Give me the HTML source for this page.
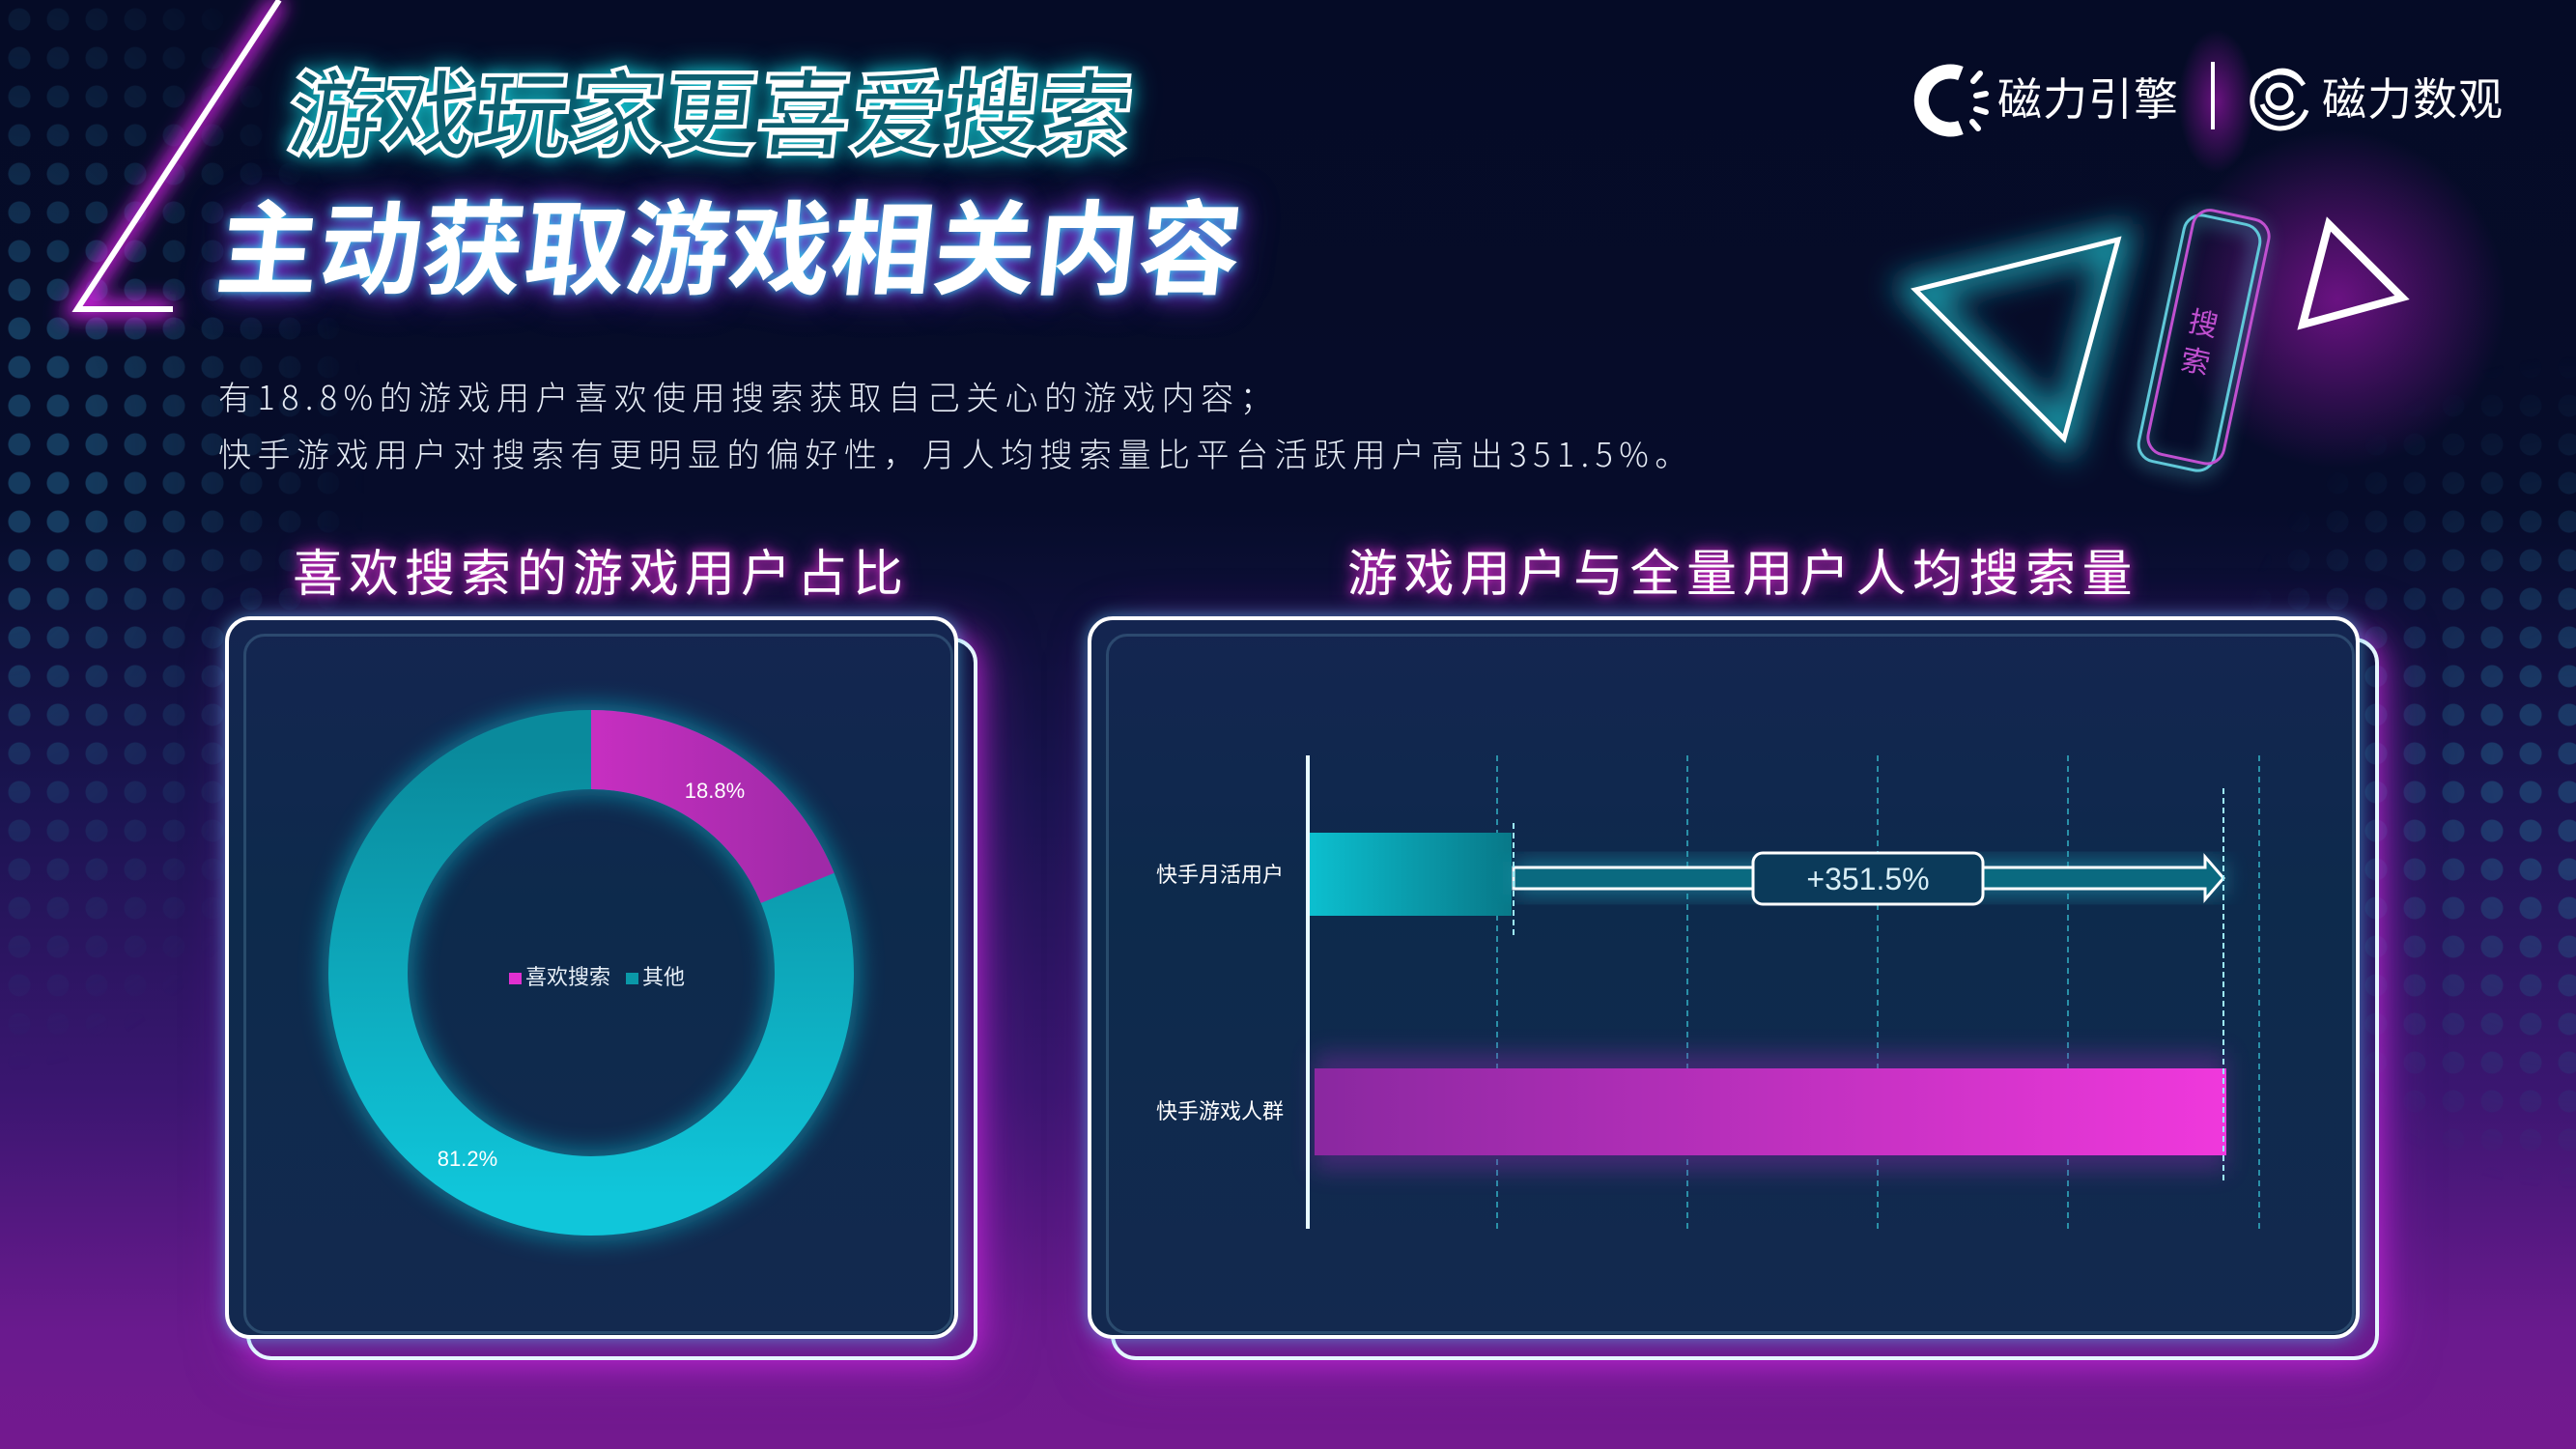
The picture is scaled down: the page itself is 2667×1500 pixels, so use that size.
<!DOCTYPE html>
<html><head><meta charset="utf-8">
<style>
*{margin:0;padding:0;box-sizing:border-box}
html,body{width:2667px;height:1500px;overflow:hidden}
body{position:relative;font-family:"Liberation Sans","Noto Sans CJK SC",sans-serif;
background:linear-gradient(180deg,#050b26 0%,#060c2a 35%,#1a1450 55%,#3a1670 75%,#6a1a8e 92%,#74198f 100%);}
.dots{position:absolute;inset:0;
background-image:radial-gradient(circle,rgba(35,100,140,.6) 0 11px,transparent 12px);
background-size:40px 40px;}
.dl{-webkit-mask-image:radial-gradient(ellipse 420px 700px at 0px 480px,rgba(0,0,0,.9) 20%,rgba(0,0,0,.4) 55%,transparent 90%);mask-image:radial-gradient(ellipse 420px 700px at 0px 480px,rgba(0,0,0,.9) 20%,rgba(0,0,0,.4) 55%,transparent 90%)}
.dr{-webkit-mask-image:radial-gradient(ellipse 420px 480px at 2667px 800px,rgba(0,0,0,.8) 20%,rgba(0,0,0,.35) 60%,transparent 90%);mask-image:radial-gradient(ellipse 420px 480px at 2667px 800px,rgba(0,0,0,.8) 20%,rgba(0,0,0,.35) 60%,transparent 90%)}
.abs{position:absolute}
.t1{left:300px;top:62px;font-size:97px;font-weight:700;font-family:"Noto Sans CJK SC",sans-serif;color:#0c5f70;-webkit-text-stroke:4px #fff;transform:skewX(-6deg);text-shadow:0 0 18px #1ad0e0,0 0 30px #0aa;white-space:nowrap;line-height:1}
.t2{left:226px;top:197px;font-size:106px;font-weight:700;font-family:"Noto Sans CJK SC",sans-serif;color:#fff;transform:skewX(-6deg);text-shadow:0 0 10px #30d8f0,0 0 24px #7a3ad8,0 0 40px #6a2ac0;white-space:nowrap;line-height:1}
.p{left:226px;font-size:34px;color:#e6ecf5;letter-spacing:6.5px;white-space:nowrap;line-height:1;font-family:"Noto Sans CJK SC",sans-serif;font-weight:300}
.st{font-size:52px;color:#fff;font-family:"Noto Sans CJK SC",sans-serif;white-space:nowrap;line-height:1;text-shadow:0 0 10px #e030d0,0 0 22px #c020c0}
.panel{position:absolute;border-radius:26px;border:4px solid #fff}
.back{border-color:#e8f6ff;box-shadow:0 0 30px rgba(200,40,220,.8),0 0 60px rgba(200,40,220,.5)}
.front{background:linear-gradient(180deg,#142550,#0d2a4c 40%,#13294f);box-shadow:0 0 18px rgba(80,200,240,.6)}
.inner{position:absolute;border-radius:22px;border:3px solid rgba(90,140,170,.35)}
.logo{font-size:46px;color:#fff;font-family:"Noto Sans CJK SC",sans-serif;white-space:nowrap;line-height:1;letter-spacing:1px}
</style></head><body>
<div class="dots dl abs"></div>
<div class="dots dr abs"></div>
<div class="abs" style="left:2230px;top:120px;width:380px;height:380px;border-radius:50%;background:radial-gradient(circle,rgba(140,20,160,.75),transparent 65%)"></div>
<div class="abs" style="left:2255px;top:30px;width:80px;height:150px;border-radius:50%;background:radial-gradient(ellipse,rgba(130,20,150,.8),transparent 70%)"></div>

<svg class="abs" style="left:0;top:0" width="2667" height="1500">
<defs>
<filter id="g1" x="-50%" y="-50%" width="200%" height="200%"><feGaussianBlur stdDeviation="10"/></filter>
<filter id="g2" x="-50%" y="-50%" width="200%" height="200%"><feGaussianBlur stdDeviation="16"/></filter>
</defs>
<polyline points="289,0 80,320 179,320" fill="none" stroke="#d020e0" stroke-width="18" filter="url(#g1)"/>
<polyline points="289,0 80,320 179,320" fill="none" stroke="#fff" stroke-width="6"/>
<polygon points="1983,300 2193,248 2137,454" fill="none" stroke="#1aa0b0" stroke-width="26" filter="url(#g2)"/>
<polygon points="1983,300 2193,248 2137,454" fill="none" stroke="#fff" stroke-width="5"/>
<polygon points="2411,232 2487,308 2384,336" fill="none" stroke="#fff" stroke-width="8"/>
<g transform="translate(2277,355) rotate(12)">
<rect x="-40" y="-130" width="80" height="260" rx="18" fill="none" stroke="#5ad0e0" stroke-width="10" opacity=".5" filter="url(#g1)"/>
<rect x="-40" y="-130" width="80" height="260" rx="18" fill="none" stroke="#60c8d8" stroke-width="3"/>
<rect x="-32" y="-137" width="80" height="258" rx="18" fill="none" stroke="#c050d0" stroke-width="3"/>
<text x="0" y="-10" fill="#c050d0" font-size="30" text-anchor="middle" font-family="Noto Sans CJK SC,sans-serif">搜</text>
<text x="0" y="30" fill="#c050d0" font-size="30" text-anchor="middle" font-family="Noto Sans CJK SC,sans-serif">索</text>
</g>
<path d="M2030,76 A30,30 0 1,0 2030,132" fill="none" stroke="#fff" stroke-width="15"/>
<g stroke="#fff" stroke-width="6" stroke-linecap="round">
<line x1="2043" y1="84" x2="2050" y2="76"/><line x1="2046" y1="99" x2="2056" y2="97"/><line x1="2046" y1="113" x2="2056" y2="116"/><line x1="2042" y1="126" x2="2048" y2="133"/>
</g>
<line x1="2291" y1="64" x2="2291" y2="134" stroke="#fff" stroke-width="4"/>
<g fill="none" stroke="#fff" stroke-width="5">
<path d="M2385,88 A29,29 0 1,0 2388,114"/>
<path d="M2347,80 A22,22 0 0,1 2382,84"/>
<path d="M2375,116 A20,20 0 0,1 2342,108"/>
<circle cx="2360" cy="100" r="12"/>
</g>
</svg>

<div class="abs t1">游戏玩家更喜爱搜索</div>
<div class="abs t2">主动获取游戏相关内容</div>
<div class="abs logo" style="left:2068px;top:77px">磁力引擎</div>
<div class="abs logo" style="left:2404px;top:77px">磁力数观</div>

<div class="abs p" style="top:393px">有18.8%的游戏用户喜欢使用搜索获取自己关心的游戏内容；</div>
<div class="abs p" style="top:452px">快手游戏用户对搜索有更明显的偏好性，月人均搜索量比平台活跃用户高出351.5%。</div>

<div class="abs st" style="left:303px;top:564px;letter-spacing:6px">喜欢搜索的游戏用户占比</div>
<div class="abs st" style="left:1395px;top:564px;letter-spacing:6.5px">游戏用户与全量用户人均搜索量</div>

<div class="panel back" style="left:255px;top:660px;width:757px;height:748px"></div>
<div class="panel front" style="left:233px;top:638px;width:759px;height:748px"></div>
<div class="inner" style="left:252px;top:656px;width:735px;height:725px"></div>
<div class="panel back" style="left:1150px;top:660px;width:1313px;height:748px"></div>
<div class="panel front" style="left:1126px;top:638px;width:1317px;height:748px"></div>
<div class="inner" style="left:1145px;top:656px;width:1293px;height:725px"></div>

<svg class="abs" style="left:0;top:0" width="2667" height="1500">
<defs>
<filter id="g3" x="-30%" y="-30%" width="160%" height="160%"><feGaussianBlur stdDeviation="12"/></filter>
<linearGradient id="mg" x1="0" y1="0" x2="1" y2="0"><stop offset="0" stop-color="#8a28a0"/><stop offset="1" stop-color="#f038dc"/></linearGradient>
<linearGradient id="mg2" x1="0" y1="0" x2="0" y2="1"><stop offset="0" stop-color="#ee34da"/><stop offset="1" stop-color="#a02aa8"/></linearGradient>
<linearGradient id="cg" x1="0" y1="0" x2="1" y2="0"><stop offset="0" stop-color="#0cc0d0"/><stop offset="1" stop-color="#087888"/></linearGradient>
<linearGradient id="tg" x1="0" y1="0" x2="0" y2="1"><stop offset="0" stop-color="#0a8a9c"/><stop offset="1" stop-color="#10c6da"/></linearGradient>
</defs>
<circle cx="612" cy="1007" r="231" fill="none" stroke="#10b8cc" stroke-width="95" opacity=".5" filter="url(#g3)"/>
<circle cx="612" cy="1007" r="231" fill="none" stroke="url(#tg)" stroke-width="82"/>
<circle cx="612" cy="1007" r="231" fill="none" stroke="url(#mg2)" stroke-width="82" stroke-dasharray="272.9 2000" transform="rotate(-90 612 1007)"/>
<text x="740" y="826" fill="#fff" font-size="22" text-anchor="middle" font-family="Liberation Sans,sans-serif">18.8%</text>
<text x="484" y="1207" fill="#fff" font-size="22" text-anchor="middle" font-family="Liberation Sans,sans-serif">81.2%</text>
<rect x="527" y="1007" width="13" height="12" fill="#e030d0"/>
<text x="544" y="1019" fill="#e8f0f8" font-size="22" font-family="Noto Sans CJK SC,sans-serif">喜欢搜索</text>
<rect x="648" y="1007" width="13" height="12" fill="#0a98a8"/>
<text x="665" y="1019" fill="#e8f0f8" font-size="22" font-family="Noto Sans CJK SC,sans-serif">其他</text>

<g stroke="#2a90a8" stroke-width="2" stroke-dasharray="6 5">
<line x1="1550" y1="782" x2="1550" y2="1272"/><line x1="1747" y1="782" x2="1747" y2="1272"/><line x1="1944" y1="782" x2="1944" y2="1272"/><line x1="2141" y1="782" x2="2141" y2="1272"/><line x1="2339" y1="782" x2="2339" y2="1272"/>
</g>
<rect x="1361" y="1090" width="944" height="122" fill="#7a2aa0" opacity=".45" filter="url(#g3)"/>
<rect x="1361" y="1106" width="944" height="90" fill="url(#mg)"/>
<rect x="1354" y="862" width="211" height="86" fill="url(#cg)"/>
<rect x="1567" y="892" width="735" height="34" fill="#1aa0b8" opacity=".6" filter="url(#g3)"/>
<path d="M1567,898 L1815,898 L1815,920 L1567,920 Z" fill="#0a6a80" stroke="#fff" stroke-width="3"/>
<path d="M2053,898 L2283,898 L2283,887 L2302,909 L2283,931 L2283,920 L2053,920 Z" fill="#0a6a80" stroke="#fff" stroke-width="3"/>
<rect x="1815" y="883" width="238" height="53" rx="10" fill="#0b3a5a" stroke="#fff" stroke-width="3"/>
<text x="1934" y="921" fill="#d8eef6" font-size="32" text-anchor="middle" font-family="Liberation Sans,sans-serif">+351.5%</text>
<g stroke="#9ef0ff" stroke-width="2" stroke-dasharray="6 4">
<line x1="1567" y1="852" x2="1567" y2="968"/>
<line x1="2302" y1="816" x2="2302" y2="1225"/>
</g>
<line x1="1354" y1="782" x2="1354" y2="1272" stroke="#2ad0e0" stroke-width="10" opacity=".5" filter="url(#g3)"/>
<line x1="1354" y1="782" x2="1354" y2="1272" stroke="#e8fbff" stroke-width="4"/>
<text x="1197" y="913" fill="#fff" font-size="22" font-family="Noto Sans CJK SC,sans-serif">快手月活用户</text>
<text x="1197" y="1158" fill="#fff" font-size="22" font-family="Noto Sans CJK SC,sans-serif">快手游戏人群</text>
</svg>
</body></html>
